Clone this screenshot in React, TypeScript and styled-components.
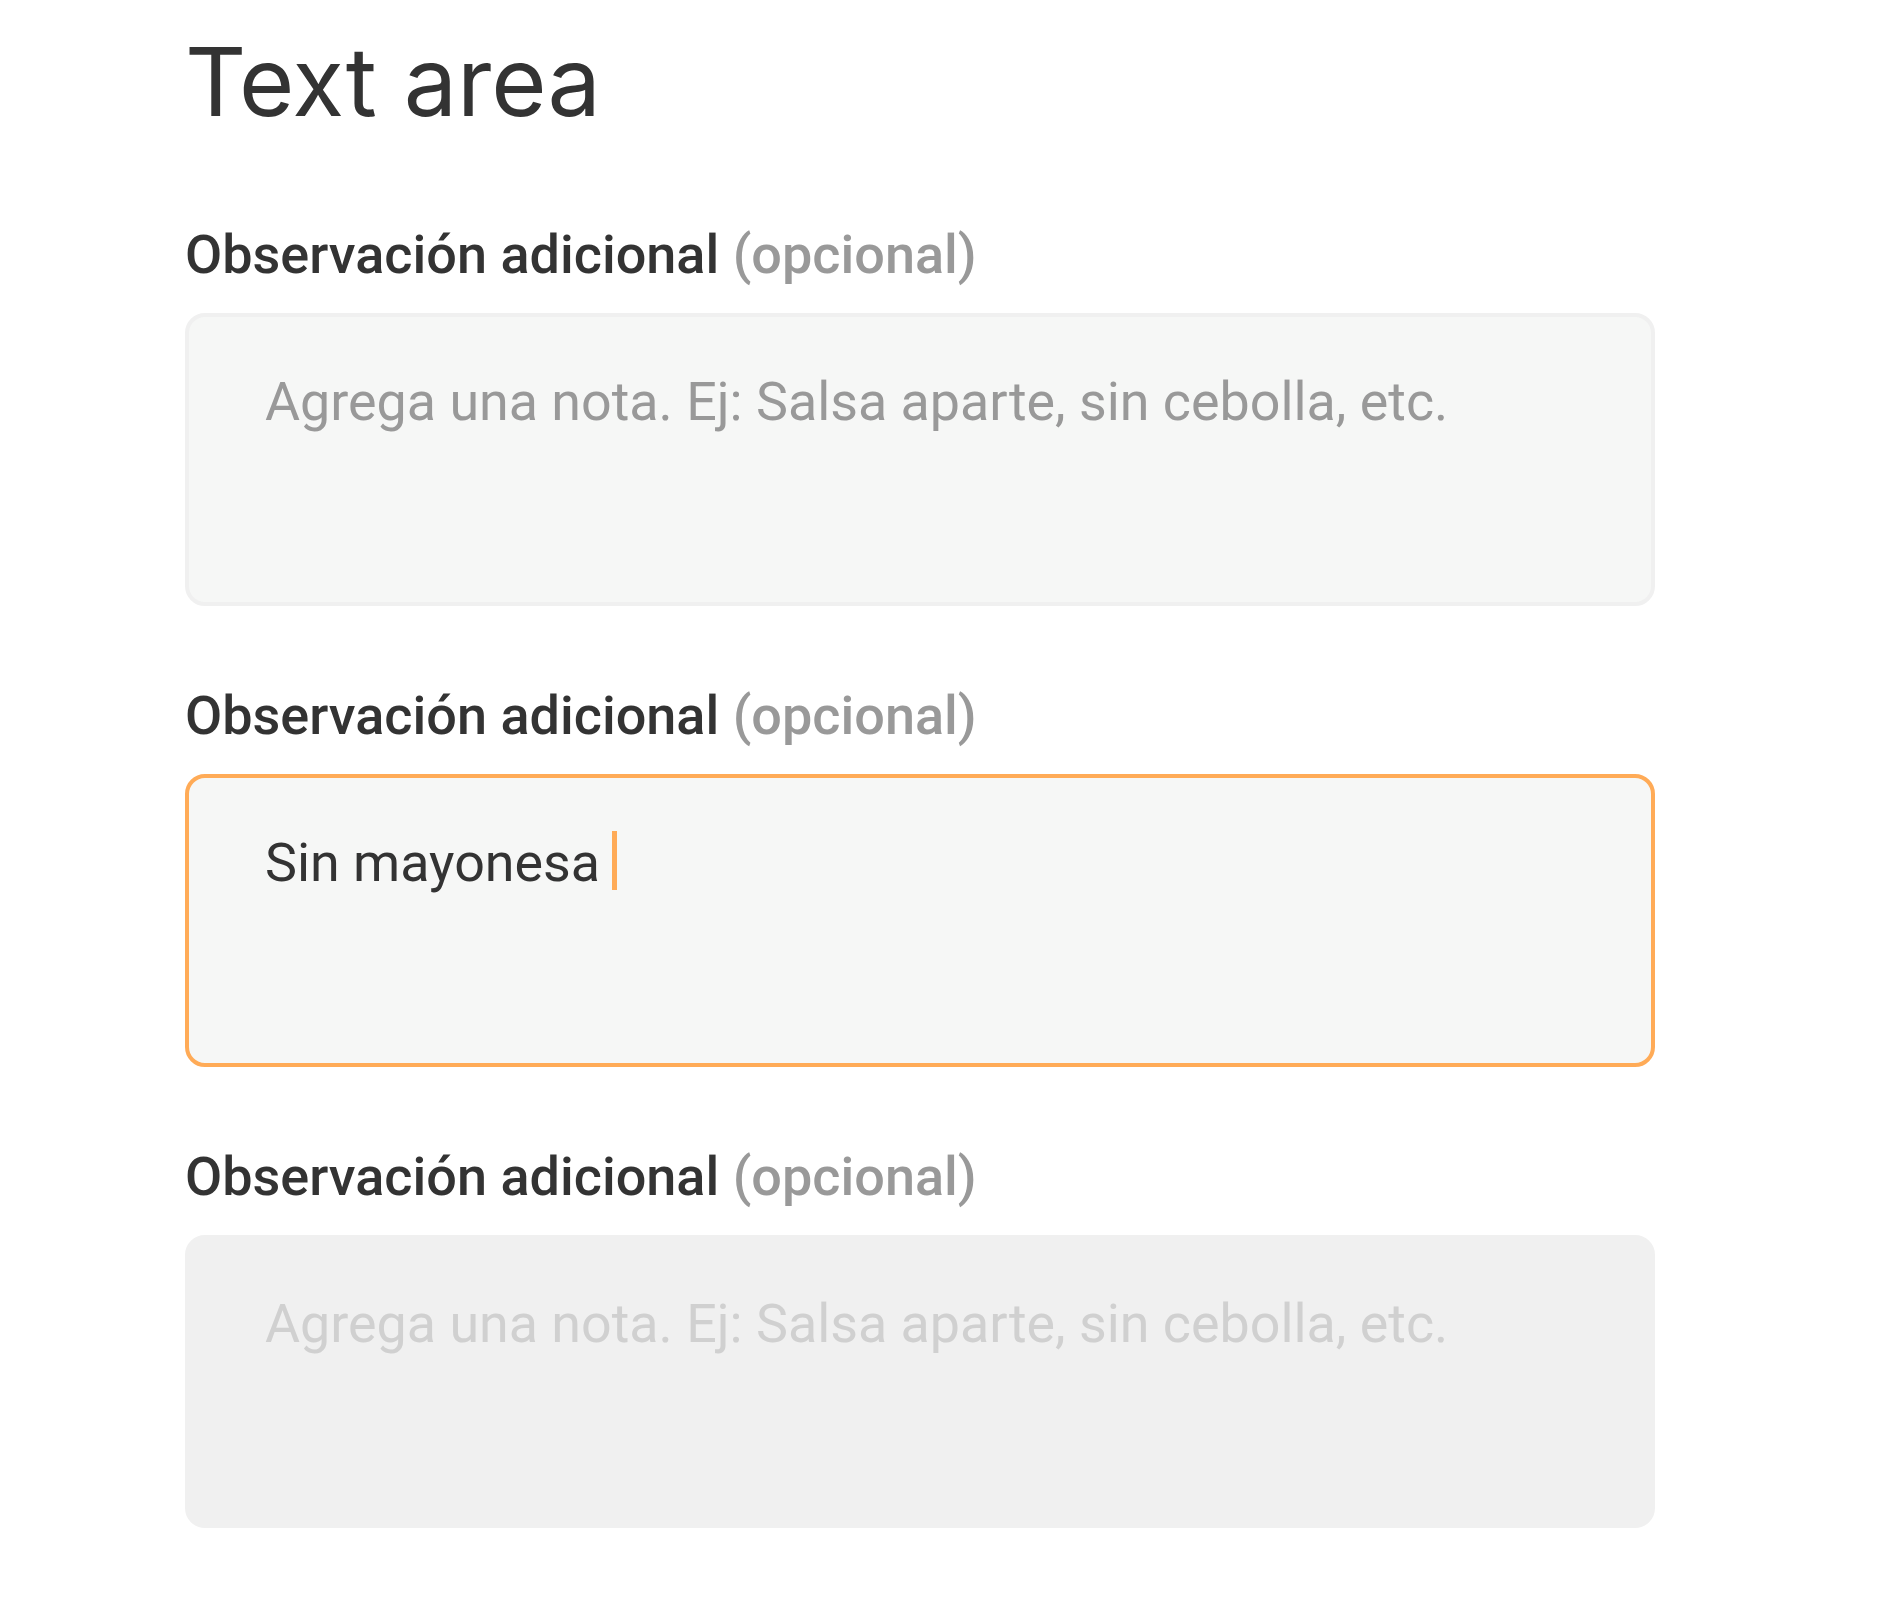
import React from 'react';
import styled, { createGlobalStyle, css } from 'styled-components';

const GlobalStyle = createGlobalStyle`
  html, body {
    margin: 0;
    padding: 0;
    background: #ffffff;
  }
  body {
    font-family: Roboto, "Noto Sans", sans-serif;
    color: #333333;
  }
`;

type Variant = 'empty' | 'focused' | 'disabled';

const Page = styled.main`
  display: flex;
  flex-direction: column;
  padding: 34px 0 80px 185px;
  width: 1470px;
`;

const Title = styled.h1`
  margin: 0 0 93px;
  font-family: Inter, "Liberation Sans", sans-serif;
  font-weight: 400;
  font-size: 95px;
  line-height: 96px;
  color: #333333;
  letter-spacing: 0;
`;

const Field = styled.section`
  display: flex;
  flex-direction: column;
  gap: 26px;
  & + & {
    margin-top: 78px;
  }
`;

const Label = styled.label`
  display: block;
  font-family: Roboto, sans-serif;
  font-weight: 500;
  font-size: 54px;
  line-height: 64px;
  color: #333333;
`;

const Optional = styled.span`
  color: #999999;
`;

const Box = styled.div<{ $variant: Variant }>`
  box-sizing: border-box;
  height: 293px;
  padding: 53px 76px;
  border: 4px solid #f0f0f0;
  border-radius: 20px;
  background: #f6f7f6;
  font-family: Roboto, sans-serif;
  font-size: 53.8px;
  line-height: 64px;
  color: #999999;
  ${p =>
    p.$variant === 'focused' &&
    css`
      border-color: #ffab57;
      color: #333333;
    `}
  ${p =>
    p.$variant === 'disabled' &&
    css`
      border-color: #f0f0f0;
      background: #f0f0f0;
      color: #d0d0d0;
    `}
`;

const Caret = styled.span`
  display: inline-block;
  width: 5px;
  height: 59px;
  margin-left: 12px;
  background: #ffab57;
  vertical-align: -9px;
`;

const fields: { variant: Variant; text: string }[] = [
  { variant: 'empty', text: 'Agrega una nota. Ej: Salsa aparte, sin cebolla, etc.' },
  { variant: 'focused', text: 'Sin mayonesa' },
  { variant: 'disabled', text: 'Agrega una nota. Ej: Salsa aparte, sin cebolla, etc.' },
];

const App: React.FC = () => (
  <>
    <GlobalStyle />
    <Page>
      <Title>Text area</Title>
      {fields.map((f, i) => (
        <Field key={i}>
          <Label>
            Observación adicional <Optional>(opcional)</Optional>
          </Label>
          <Box $variant={f.variant}>
            {f.text}
            {f.variant === 'focused' && <Caret />}
          </Box>
        </Field>
      ))}
    </Page>
  </>
);

export default App;
